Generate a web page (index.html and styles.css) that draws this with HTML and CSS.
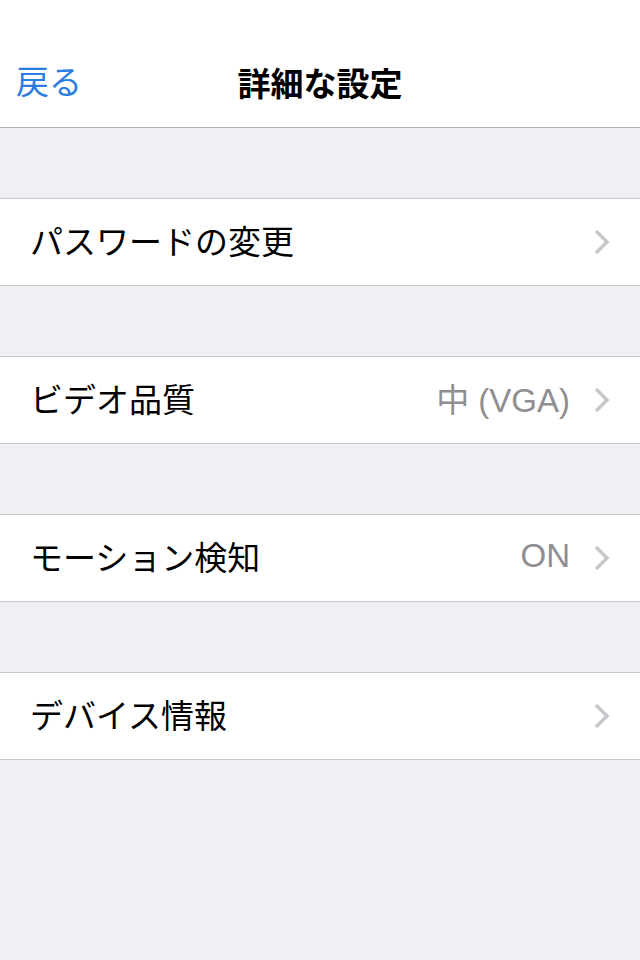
FILE: index.html
```html
<!DOCTYPE html>
<html lang="ja">
  <head>
    <meta charset="UTF-8" />
    <meta name="viewport" content="width=device-width, initial-scale=1.0" />
    <title>詳細な設定</title>
    <link rel="stylesheet" href="styles.css">
  </head>
  <body>
    <nav class="navbar">
      <a class="back" href="#">戻る</a>
      <h1>詳細な設定</h1>
    </nav>

    <div class="settings">
      <div class="group">
        <div class="row">
          <span class="label">パスワードの変更</span>
          <svg class="chevron" viewBox="0 0 16 26"><polyline points="2,2 13,13 2,24" /></svg>
        </div>
      </div>

      <div class="group">
        <div class="row">
          <span class="label">ビデオ品質</span>
          <span class="value">中 (VGA)</span>
          <svg class="chevron" viewBox="0 0 16 26"><polyline points="2,2 13,13 2,24" /></svg>
        </div>
      </div>

      <div class="group">
        <div class="row">
          <span class="label">モーション検知</span>
          <span class="value">ON</span>
          <svg class="chevron" viewBox="0 0 16 26"><polyline points="2,2 13,13 2,24" /></svg>
        </div>
      </div>

      <div class="group">
        <div class="row">
          <span class="label">デバイス情報</span>
          <svg class="chevron" viewBox="0 0 16 26"><polyline points="2,2 13,13 2,24" /></svg>
        </div>
      </div>
    </div>
  </body>
</html>
```

FILE: styles.css
```css
body {
  margin: 0;
  padding: 0;
  font-family: "Liberation Sans", "Noto Sans CJK JP", sans-serif;
  background: #efeff4;
  min-height: 100vh;
}

.navbar {
  height: 128px;
  background: #fff;
  border-bottom: 1px solid #b2b2b2;
  box-sizing: border-box;
  display: flex;
  align-items: center;
  justify-content: center;
  position: relative;
  padding-top: 36px;
}

.navbar h1 {
  margin: 0;
  font-size: 33px;
  font-weight: 700;
  color: #000;
}

.back {
  position: absolute;
  left: 16px;
  top: 62px;
  text-decoration: none;
  color: #2a7de1;
  font-size: 33px;
  line-height: 42px;
}

.settings {
  padding-top: 70px;
  display: flex;
  flex-direction: column;
  gap: 70px;
}

.group {
  background: #fff;
  border-top: 1px solid #c8c7cc;
  border-bottom: 1px solid #c8c7cc;
}

.row {
  height: 86px;
  display: flex;
  align-items: center;
  padding: 0 30px 4px 30px;
  box-sizing: border-box;
}

.label {
  flex: 1;
  font-size: 33px;
  color: #000;
}

.value {
  font-size: 33px;
  color: #8e8e93;
  margin-right: 24px;
}

.chevron {
  width: 16px;
  height: 26px;
  margin-top: 4px;
  fill: none;
  stroke: #c7c7cc;
  stroke-width: 3.5;
}
```
